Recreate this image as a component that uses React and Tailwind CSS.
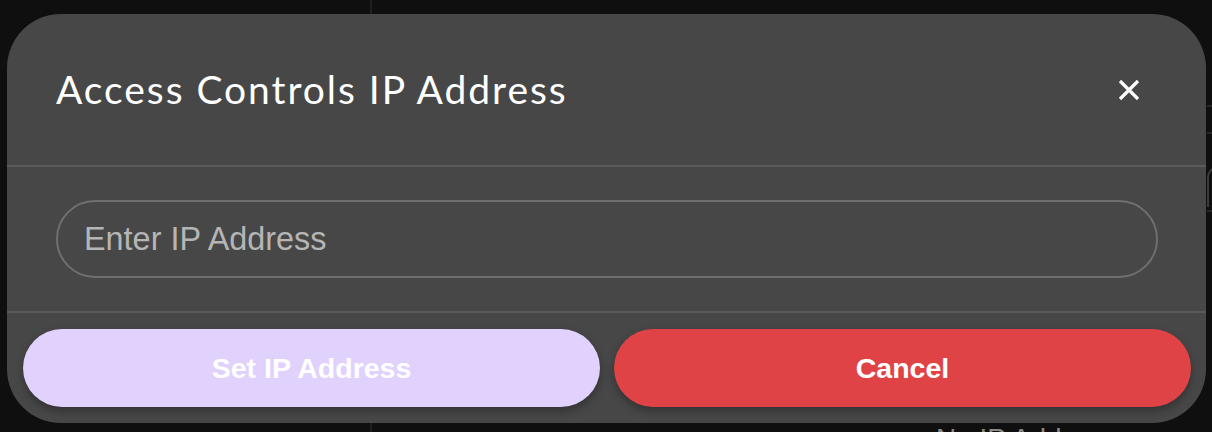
import React from 'react';

const CloseIcon = () => (
  <svg width="22" height="22" viewBox="0 0 22 22" fill="none">
    <path d="M2 2L20 20M20 2L2 20" stroke="white" strokeWidth="3.2" />
  </svg>
);

const App = () => {
  return (
    <div className="relative w-full h-[432px] overflow-hidden bg-[#0f0f0f]">
      {/* page behind the modal */}
      <div className="absolute left-[370px] top-0 w-[2px] h-full bg-[#1e1e1e]" />
      <div className="absolute left-[1207px] top-[105px] w-[10px] h-[2px] bg-[#262626]" />
      <div className="absolute left-[1207px] top-[132px] w-[10px] h-[2px] bg-[#262626]" />
      <div className="absolute left-[1207px] top-[167px] w-[20px] h-[40px] rounded-tl-[10px] border-l-2 border-t-2 border-[#3a3a3a]" />
      <div className="absolute left-[1207px] top-[210px] w-[10px] h-[2px] bg-[#262626]" />
      <div
        className="absolute left-[936px] top-[425px] text-[28px] leading-none text-[#8a8a8a]"
        style={{ fontFamily: '"Liberation Sans", Arial, sans-serif' }}
      >
        No IP Address
      </div>

      {/* modal */}
      <div className="relative flex pt-[14px] pl-[7px]">
        <div className="flex flex-col w-[1199px] h-[409px] bg-[#474747] rounded-[54px] overflow-hidden">
          <div className="flex items-center justify-between h-[151px] pl-[49px] pr-[66px]">
            <h2
              className="text-[39px] tracking-[0.05em] text-white leading-none"
              style={{ fontFamily: 'Lato, "Noto Sans", sans-serif' }}
            >
              Access Controls IP Address
            </h2>
            <button className="flex items-center justify-center">
              <CloseIcon />
            </button>
          </div>
          <div className="h-[2px] bg-[#5a5a5a]" />
          <div className="py-[33px] pl-[49px] pr-[48px]">
            <input
              className="w-full h-[78px] rounded-full border-2 border-[#6f6f6f] bg-transparent px-[26px] text-[32.4px] text-white outline-none placeholder:text-[#b5b5b5]"
              style={{ fontFamily: '"Liberation Sans", Arial, sans-serif' }}
              placeholder="Enter IP Address"
            />
          </div>
          <div className="h-[2px] bg-[#5a5a5a]" />
          <div
            className="flex gap-[14px] pt-[16px] pb-[16px] pl-[16px] pr-[15px]"
            style={{ fontFamily: '"Liberation Sans", Arial, sans-serif' }}
          >
            <button className="flex-1 h-[78px] rounded-full bg-[#e1d1fd] text-white text-[28.5px] font-bold shadow-[0_4px_8px_rgba(0,0,0,0.3)]">
              Set IP Address
            </button>
            <button className="flex-1 h-[78px] rounded-full bg-[#e04346] text-white text-[28.5px] font-bold shadow-[0_4px_8px_rgba(0,0,0,0.3)]">
              Cancel
            </button>
          </div>
        </div>
      </div>
    </div>
  );
};

export default App;
